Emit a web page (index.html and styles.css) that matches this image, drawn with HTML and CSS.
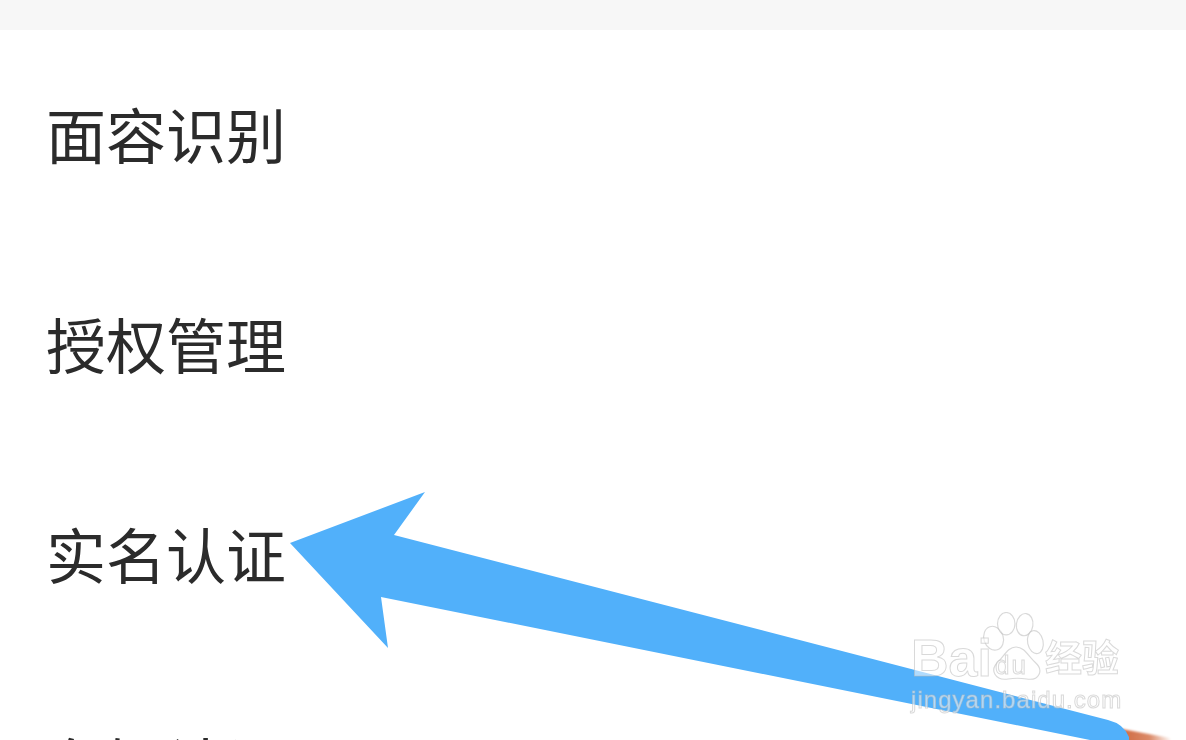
FILE: index.html
```html
<!DOCTYPE html>
<html lang="zh-CN">
<head>
<meta charset="utf-8">
<title>账号与安全</title>
<link rel="stylesheet" href="styles.css">
</head>
<body>
<div class="topbar"></div>
<ul class="menu">
  <li class="row">面容识别</li>
  <li class="row">授权管理</li>
  <li class="row">实名认证</li>
  <li class="row">车辆认证</li>
</ul>
<svg class="overlay" viewBox="0 0 1186 740" aria-hidden="true">
  <defs>
    <linearGradient id="tailfade" x1="0" x2="1" y1="0" y2="0">
      <stop offset="0" stop-color="#cf6a42"/>
      <stop offset=".55" stop-color="#dc8a68"/>
      <stop offset="1" stop-color="#ffffff"/>
    </linearGradient>
    <filter id="soft" x="-20%" y="-50%" width="140%" height="200%"><feGaussianBlur stdDeviation="1"/></filter>
  </defs>
  <path class="tail" d="M1122 729 L1170 738 L1172 744 L1122 744 Z" fill="url(#tailfade)" filter="url(#soft)"/>
  <path class="arrow" d="M290 543 L425 492 L394 535 L1108 720 Q1124 724 1129 737 L1129 740 L1095 740 L1090 740 L381 597 L388 648 Z"/>
</svg>
<div class="mark">
  <svg class="paw" viewBox="0 0 68 70" aria-hidden="true">
    <ellipse cx="13" cy="27" rx="10" ry="12.5" transform="rotate(-18 13 27)"/>
    <ellipse cx="26" cy="12" rx="9" ry="11.5"/>
    <ellipse cx="45" cy="13" rx="8.5" ry="11.5" transform="rotate(8 45 13)"/>
    <ellipse cx="56" cy="31" rx="8" ry="12" transform="rotate(-12 56 31)"/>
    <path d="M36 36 C28 36 24 45 18 51 C8 60 15 71 28 69 C34 68 41 68 47 69 C60 71 65 60 56 52 C49 46 45 36 36 36 Z"/>
  </svg>
  <span class="brand">Bai</span><span class="du">du</span><span class="jy">经验</span>
  <div class="url">jingyan.baidu.com</div>
</div>
</body>
</html>
```

FILE: styles.css
```css
html, body {
  margin: 0;
  padding: 0;
  width: 1186px;
  height: 740px;
  overflow: hidden;
  background: #fff;
}
body {
  position: relative;
  font-family: "Noto Sans CJK SC", "Liberation Sans", sans-serif;
}
.topbar {
  height: 30px;
  background: #f7f7f7;
}
.menu {
  list-style: none;
  margin: 0;
  padding: 0 0 0 46px;
  height: 710px;
  overflow: hidden;
}
.row {
  height: 210px;
  line-height: 205px;
  font-size: 60px;
  color: #2b2b2b;
  filter: blur(.4px);
}
.overlay {
  position: absolute;
  left: 0;
  top: 0;
  width: 1186px;
  height: 740px;
}
.arrow { fill: #51b0fa; }
.mark {
  position: absolute;
  left: 911px;
  top: 612px;
  width: 215px;
  height: 106px;
  font-family: "Liberation Sans", sans-serif;
  color: rgba(255,255,255,.55);
  -webkit-text-stroke: 1px rgba(185,185,185,.55);
  filter: blur(.4px);
}
.paw {
  position: absolute;
  left: 70px;
  top: 0;
  width: 66px;
  height: 68px;
  fill: rgba(255,255,255,.5);
  stroke: rgba(185,185,185,.55);
  stroke-width: 1.2;
}
.brand {
  position: absolute;
  left: 0;
  top: 18px;
  font-size: 52px;
  font-weight: 700;
  line-height: 56px;
}
.du {
  position: absolute;
  left: 84px;
  top: 38px;
  font-size: 26px;
  line-height: 30px;
  letter-spacing: 2px;
}
.jy {
  position: absolute;
  left: 134px;
  top: 22px;
  font-family: "Noto Sans CJK SC", sans-serif;
  font-size: 37px;
  font-weight: 700;
  line-height: 44px;
}
.url {
  position: absolute;
  left: 0;
  top: 73px;
  font-size: 24px;
  line-height: 30px;
  letter-spacing: 1.05px;
  white-space: nowrap;
}
```
